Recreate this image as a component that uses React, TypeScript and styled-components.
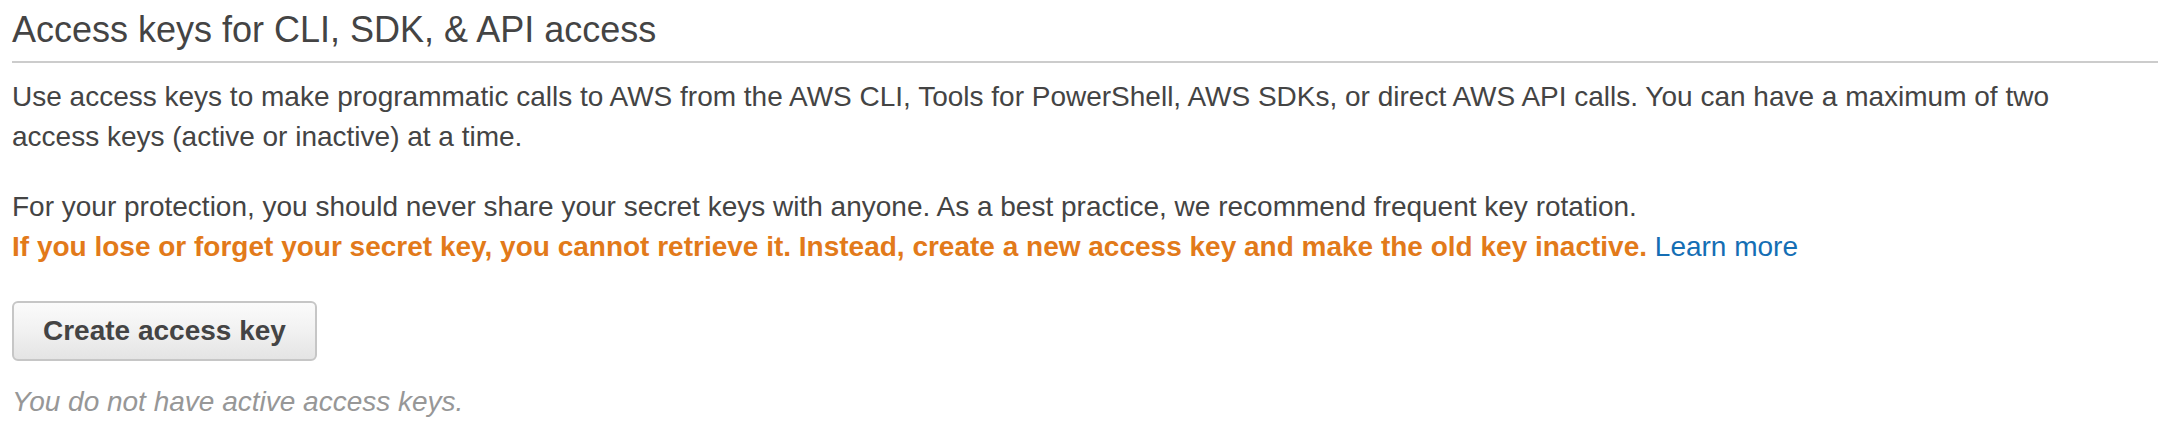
import React from 'react';
import styled, { createGlobalStyle } from 'styled-components';

const GlobalStyle = createGlobalStyle`
  html, body {
    margin: 0;
    padding: 0;
    background: #ffffff;
  }
  body {
    font-family: "Liberation Sans", Arial, Helvetica, sans-serif;
    color: #444444;
  }
`;

const Page = styled.div`
  padding: 10px 14px 0 12px;
`;

const SectionTitle = styled.h2`
  margin: 0;
  padding-bottom: 11px;
  border-bottom: 2px solid #cccccc;
  font-size: 36px;
  font-weight: 400;
  line-height: 40px;
  color: #444444;
`;

const Paragraph = styled.p<{ $gap?: number }>`
  max-width: 2110px;
  margin: ${(p) => p.$gap ?? 30}px 0 0;
  font-size: 28px;
  line-height: 40px;
  color: #444444;
`;

const Warning = styled.strong`
  font-weight: 700;
  color: #e27a1a;
`;

const LearnMore = styled.a`
  color: #146eb4;
  text-decoration: none;
`;

const Button = styled.button`
  display: block;
  margin-top: 34px;
  height: 60px;
  padding: 0 29px;
  border: 2px solid #c6c6c6;
  border-radius: 6px;
  background: linear-gradient(to bottom, #fbfbfb 0%, #f1f1f1 50%, #e4e4e4 100%);
  font-family: "Liberation Sans", Arial, Helvetica, sans-serif;
  font-size: 28px;
  font-weight: 700;
  line-height: 56px;
  color: #444444;
  cursor: pointer;
`;

const EmptyNote = styled.p`
  margin: 21px 0 0;
  font-size: 28px;
  font-style: italic;
  line-height: 40px;
  color: #979797;
`;

const App: React.FC = () => {
  return (
    <>
      <GlobalStyle />
      <Page>
        <SectionTitle>Access keys for CLI, SDK, &amp; API access</SectionTitle>
        <Paragraph $gap={14}>
          Use access keys to make programmatic calls to AWS from the AWS CLI, Tools for PowerShell, AWS SDKs, or
          direct AWS API calls. You can have a maximum of two access keys (active or inactive) at a time.
        </Paragraph>
        <Paragraph>
          For your protection, you should never share your secret keys with anyone. As a best practice, we recommend
          frequent key rotation.
          <br />
          <Warning>
            If you lose or forget your secret key, you cannot retrieve it. Instead, create a new access key and make
            the old key inactive.
          </Warning>{' '}
          <LearnMore href="#">Learn more</LearnMore>
        </Paragraph>
        <Button type="button">Create access key</Button>
        <EmptyNote>You do not have active access keys.</EmptyNote>
      </Page>
    </>
  );
};

export default App;
